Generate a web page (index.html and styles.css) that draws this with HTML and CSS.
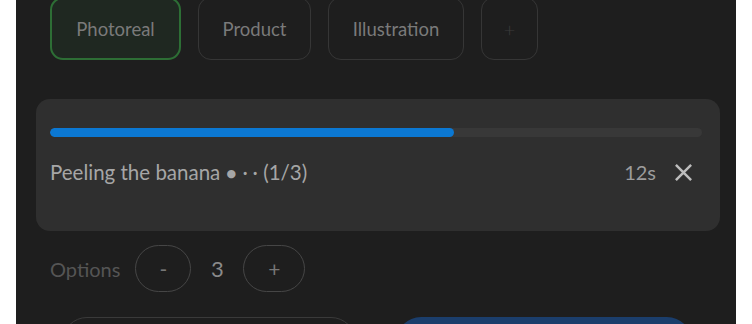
FILE: index.html
```html
<!DOCTYPE html>
<html>
<head>
<meta charset="utf-8">
<link rel="stylesheet" href="styles.css">
</head>
<body>
<div class="panel">
  <div class="chips">
    <div class="chip chip-active">Photoreal</div>
    <div class="chip">Product</div>
    <div class="chip">Illustration</div>
    <div class="chip chip-add">+</div>
  </div>
  <div class="card">
    <div class="track"><div class="fill" style="width:62%"></div></div>
    <div class="status">
      <span class="status-text">Peeling the banana <span class="dot-big">●</span><span class="dot-small">·</span><span class="dot-small">·</span><span class="paren">(1/3)</span></span>
      <span class="status-right">
        <span class="eta">12s</span>
        <svg class="close" width="20" height="20" viewBox="0 0 20 20"><path d="M2 2 L18 18 M18 2 L2 18" stroke="#bdbdbd" stroke-width="2.6" stroke-linecap="butt" fill="none"/></svg>
      </span>
    </div>
  </div>
  <div class="options">
    <span class="options-label">Options</span>
    <span class="pill pill-minus">-</span>
    <span class="count">3</span>
    <span class="pill pill-plus">+</span>
  </div>
  <div class="actions">
    <div class="btn btn-outline"></div>
    <div class="btn btn-primary"></div>
  </div>
</div>
</body>
</html>
```
FILE: styles.css
```css
html, body {
  margin: 0;
  padding: 0;
  background: #ffffff;
}
body {
  font-family: "Lato", "Open Sans", sans-serif;
}
.panel {
  margin: 0 16px;
  height: 324px;
  background: #1e1e1e;
  padding: 0 16px 0 20px;
  overflow: hidden;
  box-sizing: border-box;
}
.chips {
  display: flex;
  gap: 17px;
  padding-left: 14px;
  margin-top: -3px;
}
.chip {
  height: 63px;
  box-sizing: border-box;
  border: 1.5px solid #363636;
  border-radius: 13px;
  display: flex;
  align-items: center;
  justify-content: center;
  font-size: 18.5px;
  color: #7a7a7a;
}
.chip-active {
  border: 2px solid #2d6e35;
  background: #1f2821;
  width: 131px;
}
.chip:nth-child(2) {
  width: 113px;
}
.chip:nth-child(3) {
  width: 136px;
}
.chip-add {
  width: 57px;
  color: #3c3c3c;
  font-size: 20px;
  font-weight: 300;
}
.card {
  margin-top: 39px;
  height: 132px;
  box-sizing: border-box;
  background: #2f2f2f;
  border-radius: 14px;
  padding: 29px 18px 0 14px;
}
.track {
  height: 9px;
  border-radius: 5px;
  background: #383838;
  overflow: hidden;
}
.fill {
  height: 100%;
  background: #0b78d3;
  border-radius: 5px;
}
.status {
  margin-top: 22px;
  height: 26px;
  display: flex;
  align-items: center;
  justify-content: space-between;
}
.status-text {
  font-size: 20.5px;
  color: #a6a6a6;
}
.dot-big {
  font-family: "DejaVu Sans", sans-serif;
  font-size: 11px;
  vertical-align: 3px;
  margin-left: 1px;
  margin-right: 4px;
}
.dot-small {
  display: inline-block;
  width: 10px;
  text-align: center;
}
.paren {
  margin-left: 3px;
}
.status-right {
  display: flex;
  align-items: center;
  gap: 18px;
  padding-right: 9px;
}
.eta {
  font-size: 20px;
  color: #9c9c9c;
}
.close {
  display: block;
  width: 19px;
  height: 19px;
}
.options {
  margin-top: 14px;
  padding-left: 14px;
  height: 47px;
  display: flex;
  align-items: center;
}
.options-label {
  font-size: 20px;
  color: #555555;
  margin-right: 15px;
}
.pill {
  height: 47px;
  box-sizing: border-box;
  border: 1.5px solid #464646;
  border-radius: 24px;
  display: flex;
  align-items: center;
  justify-content: center;
  color: #777777;
  font-size: 21px;
}
.pill-minus {
  width: 56px;
}
.pill-plus {
  width: 62px;
}
.count {
  font-size: 22px;
  color: #8a8a8a;
  width: 52px;
  text-align: center;
}
.actions {
  margin-top: 25px;
  display: flex;
  gap: 40px;
  padding-left: 26px;
}
.btn {
  height: 50px;
  width: 294px;
  box-sizing: border-box;
  border-radius: 26px;
}
.btn-outline {
  border: 1.5px solid #3a3a3a;
}
.btn-primary {
  background: #1b3e6c;
  width: 296px;
}
```
